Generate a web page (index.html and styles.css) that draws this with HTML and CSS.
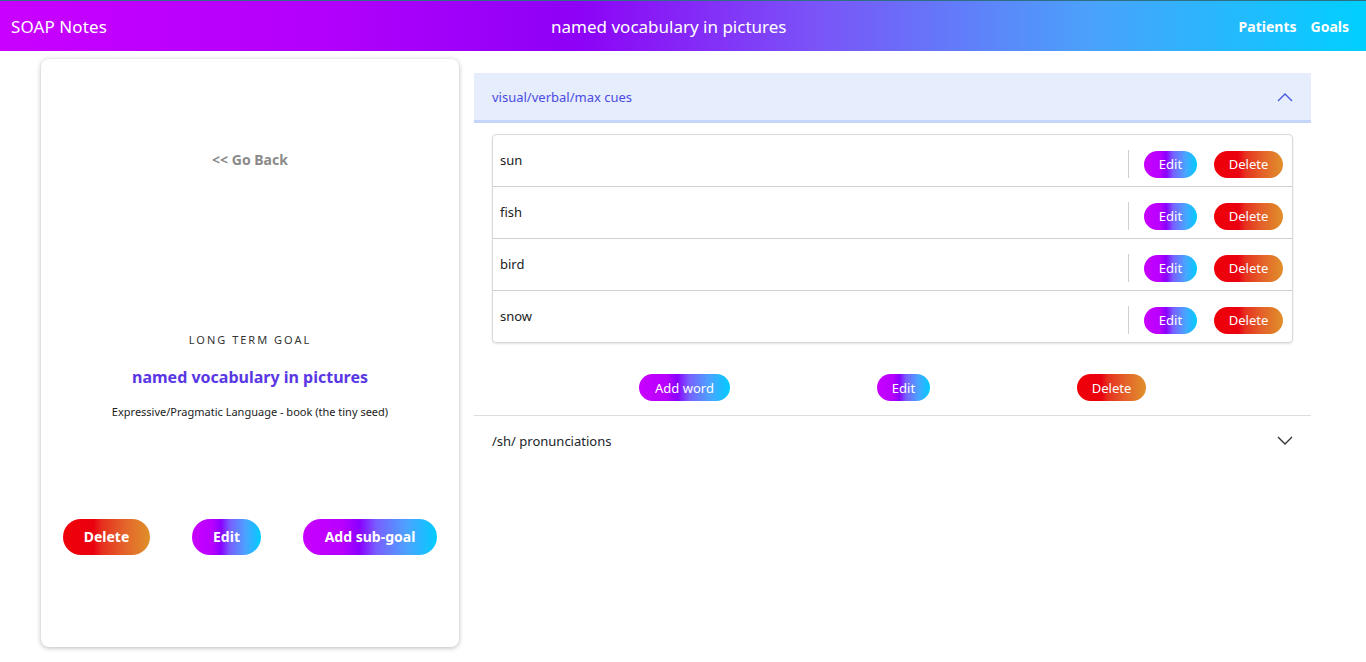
FILE: index.html
```html
<!DOCTYPE html>
<html lang="en">
<head>
<meta charset="utf-8">
<title>SOAP Notes</title>
<link rel="stylesheet" href="styles.css">
</head>
<body>
<header class="topbar">
  <div class="brand">SOAP Notes</div>
  <div class="page-title">named vocabulary in pictures</div>
  <nav class="nav">
    <a class="nav-link" href="#">Patients</a>
    <a class="nav-link" href="#">Goals</a>
  </nav>
</header>

<main class="layout">
  <section class="goal-card">
    <a class="go-back" href="#">&lt;&lt; Go Back</a>
    <div class="goal-label">LONG TERM GOAL</div>
    <h1 class="goal-title">named vocabulary in pictures</h1>
    <p class="goal-sub">Expressive/Pragmatic Language - book (the tiny seed)</p>
    <div class="goal-actions">
      <button class="btn btn-lg btn-red">Delete</button>
      <button class="btn btn-lg btn-grad">Edit</button>
      <button class="btn btn-lg btn-grad">Add sub-goal</button>
    </div>
  </section>

  <section class="accordion">
    <div class="acc-item">
      <div class="acc-header active">
        <span>visual/verbal/max cues</span>
        <svg class="chev" width="16" height="10" viewBox="0 0 16 10"><path d="M1 9 L8 2 L15 9" fill="none" stroke="#4a55e0" stroke-width="1.4"/></svg>
      </div>
      <div class="acc-body">
        <ul class="word-list">
          <li class="word-row"><span class="word">sun</span><div class="row-actions"><span class="divider"></span><button class="btn btn-sm btn-grad">Edit</button><button class="btn btn-sm btn-red">Delete</button></div></li>
          <li class="word-row"><span class="word">fish</span><div class="row-actions"><span class="divider"></span><button class="btn btn-sm btn-grad">Edit</button><button class="btn btn-sm btn-red">Delete</button></div></li>
          <li class="word-row"><span class="word">bird</span><div class="row-actions"><span class="divider"></span><button class="btn btn-sm btn-grad">Edit</button><button class="btn btn-sm btn-red">Delete</button></div></li>
          <li class="word-row"><span class="word">snow</span><div class="row-actions"><span class="divider"></span><button class="btn btn-sm btn-grad">Edit</button><button class="btn btn-sm btn-red">Delete</button></div></li>
        </ul>
        <div class="body-actions">
          <button class="btn btn-sm btn-grad">Add word</button>
          <button class="btn btn-sm btn-grad">Edit</button>
          <button class="btn btn-sm btn-red">Delete</button>
        </div>
      </div>
    </div>
    <div class="acc-item">
      <div class="acc-header">
        <span>/sh/ pronunciations</span>
        <svg class="chev" width="16" height="10" viewBox="0 0 16 10"><path d="M1 1 L8 8 L15 1" fill="none" stroke="#333" stroke-width="1.4"/></svg>
      </div>
    </div>
  </section>
</main>
</body>
</html>
```

FILE: styles.css
```css
* { box-sizing: border-box; }
html, body { margin: 0; padding: 0; }
body {
  font-family: "Noto Sans", "Open Sans", sans-serif;
  color: #212529;
  background: #fff;
  width: 1366px;
  height: 662px;
  overflow: hidden;
}

.topbar {
  height: 51px;
  border-top: 1px solid #2e6f86;
  background: linear-gradient(90deg, #c900ff 0%, #b000fb 25%, #8e00f6 42%, #7a55f8 60%, #4aa2fb 80%, #00d0fe 100%);
  display: flex;
  align-items: center;
  justify-content: space-between;
  padding: 0 17px 0 11px;
  color: #fff;
}
.brand { font-size: 17px; letter-spacing: 0.1px; }
.page-title { font-size: 17px; margin-left: -8px; }
.nav { display: flex; gap: 14px; }
.nav-link { color: #fff; text-decoration: none; font-weight: 700; font-size: 14px; }

.layout {
  display: grid;
  grid-template-columns: 418px 837px;
  column-gap: 15px;
  padding-left: 41px;
  align-items: start;
}

.goal-card {
  margin-top: 8px;
  height: 588px;
  border-radius: 8px;
  background: #fff;
  box-shadow: 0 1px 5px rgba(0,0,0,0.28);
  display: flex;
  flex-direction: column;
  align-items: center;
  padding-top: 90px;
}
.go-back {
  color: #8a8a8a;
  font-weight: 700;
  font-size: 14px;
  line-height: 20px;
  margin-top: 1px;
  text-decoration: none;
}
.goal-label {
  margin-top: 162px;
  font-size: 11px;
  line-height: 16px;
  letter-spacing: 2px;
  color: #333;
}
.goal-title {
  margin: 17px 0 0;
  font-size: 16px;
  line-height: 24px;
  font-weight: 700;
  color: #5a37e4;
}
.goal-sub {
  margin: 15px 0 0;
  font-size: 11px;
  line-height: 16px;
  color: #222;
}
.goal-actions {
  margin-top: 99px;
  width: 100%;
  padding: 0 22px;
  display: flex;
  justify-content: space-between;
}

.btn {
  border: none;
  color: #fff;
  font-family: inherit;
  border-radius: 999px;
  cursor: pointer;
  padding: 0;
}
.btn-grad {
  background: linear-gradient(90deg, #c800ff 0%, #b800ff 30%, #8a00ff 42%, #7860ff 55%, #4aa4ff 78%, #00ccff 100%);
}
.btn-red {
  background: linear-gradient(90deg, #f00008 0%, #ea0010 35%, #e6301e 45%, #e4622a 70%, #e0902a 100%);
}
.btn-lg {
  height: 36px;
  font-size: 14px;
  font-weight: 700;
  padding-bottom: 2px;
}
.goal-actions .btn-red { width: 87px; }
.goal-actions .btn-grad:nth-child(2) { width: 69px; }
.goal-actions .btn-grad:nth-child(3) { width: 134px; }

.btn-sm {
  height: 27px;
  font-size: 13px;
  padding: 0 12px;
}

.accordion { margin-top: 22px; }
.acc-header {
  display: flex;
  align-items: center;
  justify-content: space-between;
  padding: 0 18px;
  font-size: 13px;
  color: #212529;
}
.acc-header.active {
  height: 50px;
  background: #e6edfc;
  color: #4b4be2;
  border-bottom: 3px solid #c6d5fb;
}
.acc-item + .acc-item .acc-header {
  height: 50px;
  border-top: 1px solid #dedede;
}
.chev { display: block; }

.acc-body { padding: 11px 18px 0; }
.word-list {
  list-style: none;
  margin: 0;
  padding: 0;
  border: 1px solid #d9d9d9;
  border-radius: 4px;
  box-shadow: 0 1px 2px rgba(0,0,0,0.12);
}
.word-row {
  height: 52px;
  display: flex;
  align-items: center;
  justify-content: space-between;
  padding: 0 9px 0 7px;
  border-bottom: 1px solid #d0d0d0;
}
.word-row:last-child { border-bottom: none; height: 51px; }
.word { font-size: 13px; color: #222; margin-top: -1px; }
.row-actions {
  display: flex;
  align-items: center;
  padding-top: 7px;
}
.divider {
  width: 1px;
  height: 28px;
  background: #cfcfcf;
  margin-right: 15px;
}
.row-actions .btn-grad { width: 53px; margin-right: 17px; }
.row-actions .btn-red { width: 69px; }

.body-actions {
  display: flex;
  justify-content: center;
  gap: 147px;
  padding: 31px 0 14px;
}
.body-actions .btn-grad:first-child { width: 91px; }
.body-actions .btn-grad:nth-child(2) { width: 53px; }
.body-actions .btn-red { width: 69px; }
```
